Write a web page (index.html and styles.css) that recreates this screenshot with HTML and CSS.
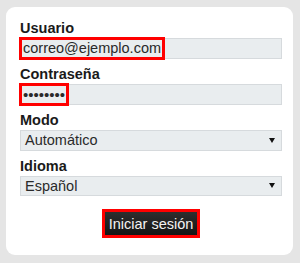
FILE: index.html
```html
<!DOCTYPE html>
<html lang="es">
<head>
<meta charset="utf-8">
<link rel="stylesheet" href="styles.css">
</head>
<body>
<form class="card">
  <label class="lbl">Usuario</label>
  <div class="field"><span class="hl">correo@ejemplo.com</span></div>
  <label class="lbl">Contraseña</label>
  <div class="field"><span class="hl dots">••••••••</span></div>
  <label class="lbl">Modo</label>
  <div class="field select"><span class="val">Automático</span><span class="arrow"></span></div>
  <label class="lbl">Idioma</label>
  <div class="field select"><span class="val">Español</span><span class="arrow"></span></div>
  <div class="actions"><button type="button" class="btn">Iniciar sesión</button></div>
</form>
</body>
</html>
```
FILE: styles.css
```css
html, body { margin: 0; padding: 0; }
body {
  background: #e5e5e5;
  width: 300px;
  height: 263px;
  font-family: "Liberation Sans", Arial, sans-serif;
  font-size: 14.5px;
  overflow: hidden;
}
.card {
  margin: 7px 7px 0 6px;
  background: #fff;
  border-radius: 9px;
  padding: 14px 11px 19px 14px;
  display: flex;
  flex-direction: column;
  height: 248px;
  box-sizing: border-box;
}
.lbl {
  font-weight: bold;
  color: #1a1a1a;
  line-height: 15px;
  margin-top: 8px;
  margin-bottom: 2px;
}
.lbl:first-child { margin-top: 0; }
.field {
  height: 21px;
  box-sizing: border-box;
  border: 1px solid #d6dadd;
  background: #e9edef;
  display: flex;
  align-items: stretch;
  color: #2a2a2a;
}
.hl {
  display: inline-flex;
  align-items: center;
  padding: 0 2px;
  outline: 3px solid #f00;
  outline-offset: -1px;
  line-height: 19px;
}
.dots {
  font-size: 15px;
  padding: 0 3px;
  width: 46px;
  box-sizing: border-box;
  justify-content: center;
}
.select {
  justify-content: space-between;
  align-items: center;
  padding: 0 6px 0 4px;
}
.arrow {
  width: 0;
  height: 0;
  border-left: 3px solid transparent;
  border-right: 3px solid transparent;
  border-top: 5px solid #111;
}
.actions {
  display: flex;
  justify-content: center;
  margin-top: 15px;
}
.btn {
  font-family: "Liberation Sans", Arial, sans-serif;
  font-size: 14.5px;
  color: #f2f2f2;
  background: linear-gradient(#2e2e2e, #141414);
  border: 1px solid #000;
  padding: 0 4px;
  height: 25px;
  outline: 3px solid #f00;
  outline-offset: -1px;
}
```
